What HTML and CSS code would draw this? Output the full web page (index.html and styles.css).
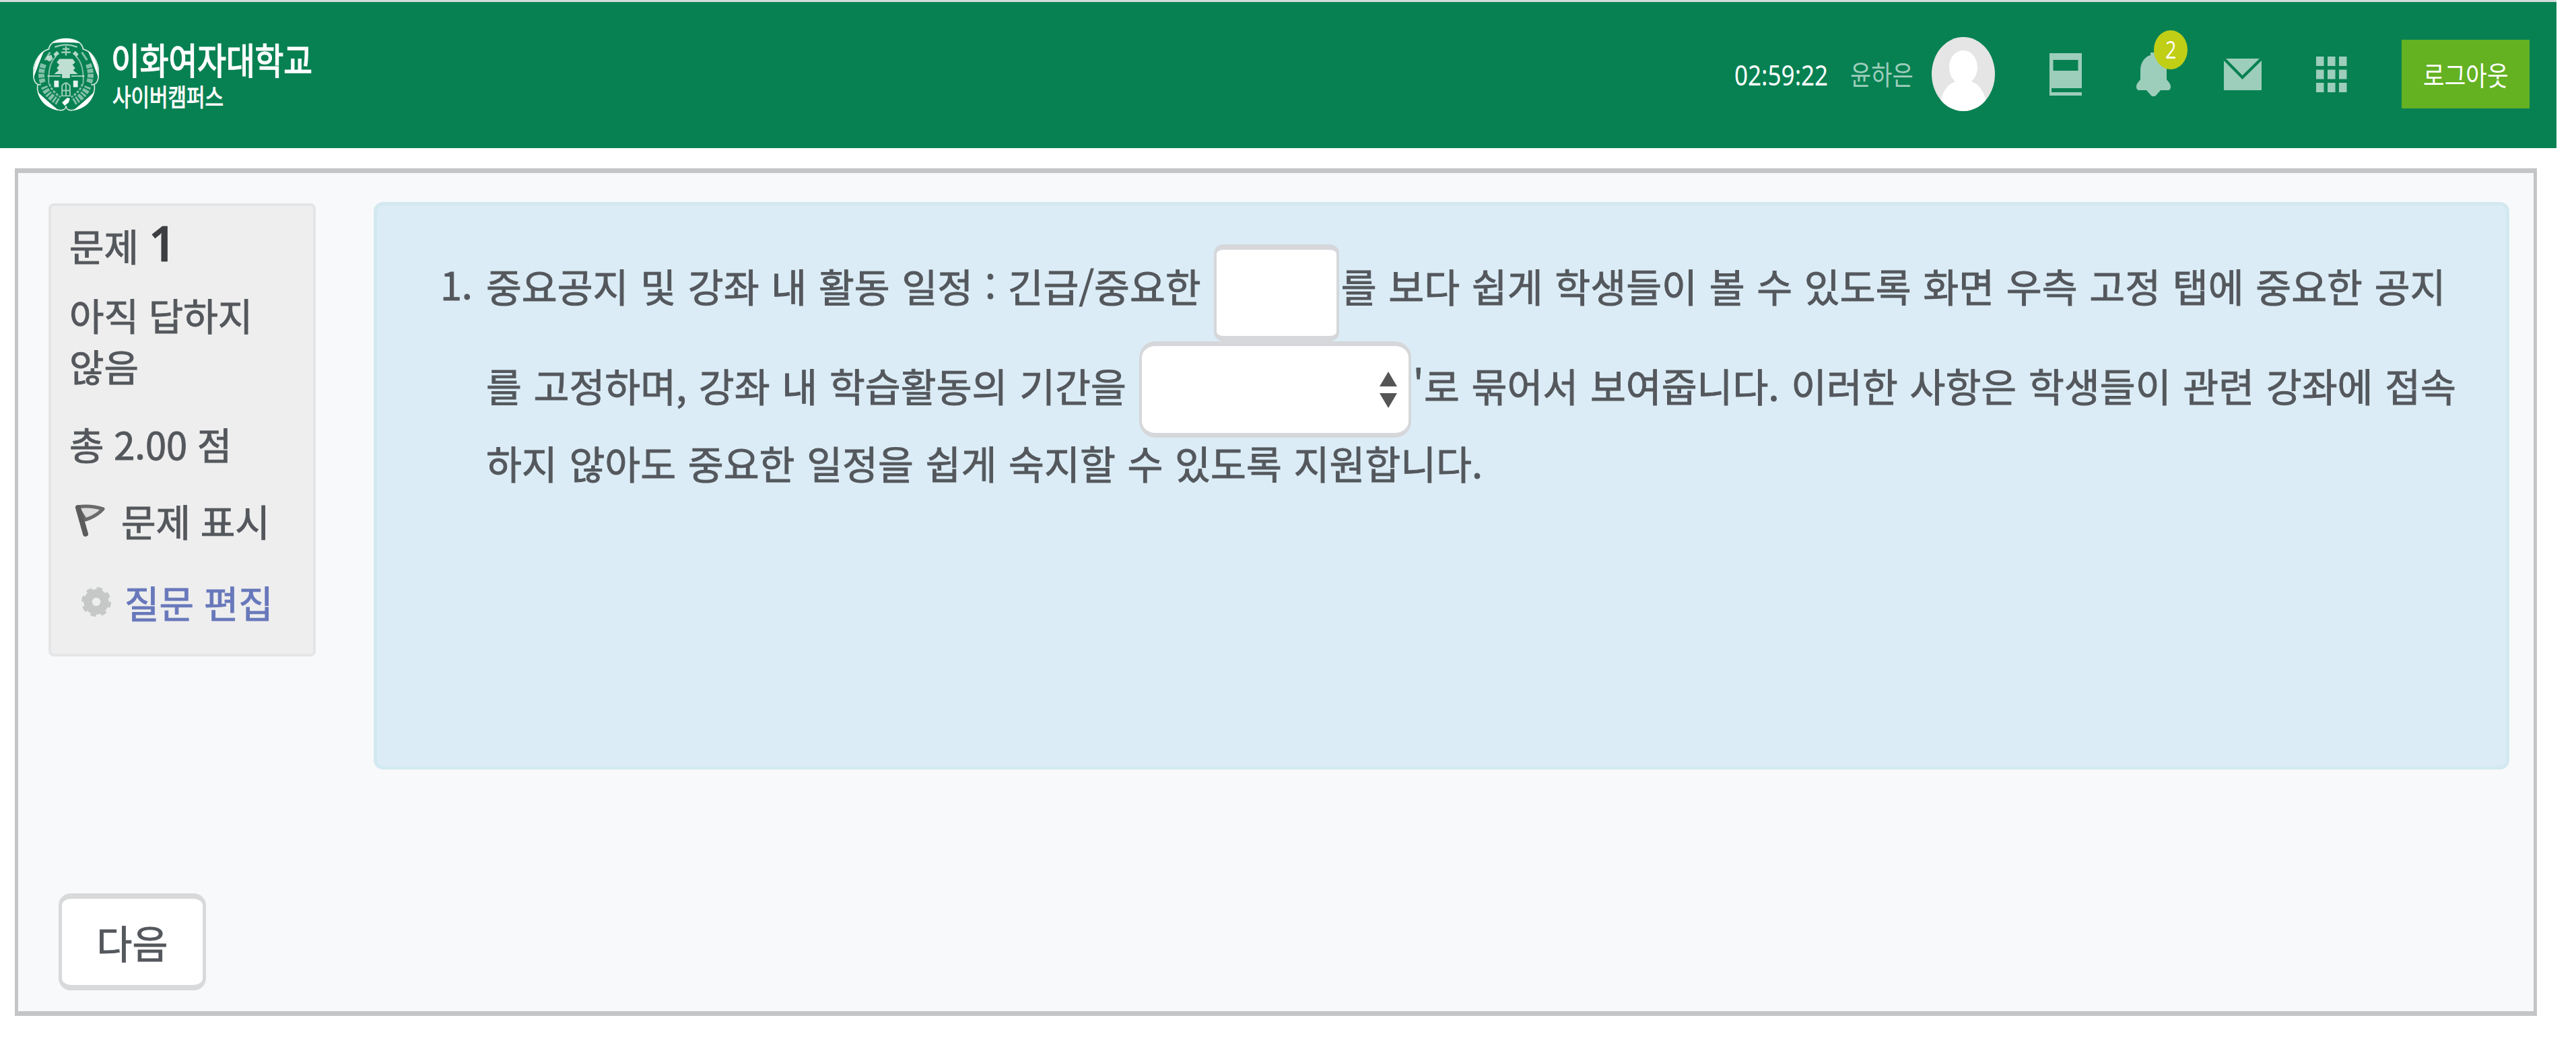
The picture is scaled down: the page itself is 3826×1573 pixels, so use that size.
FILE: index.html
```html
<!DOCTYPE html>
<html lang="ko">
<head>
<meta charset="utf-8">
<title>이화여자대학교 사이버캠퍼스</title>
<link rel="stylesheet" href="styles.css">
</head>
<body>
<header class="topbar">
  <a class="brand">
    <svg class="emblem" viewBox="0 0 100 112" fill="none" stroke="#fff">
      <g stroke-width="1.8" opacity=".8">
        <path d="M24 18C25-4 75-4 76 18"/>
        <path d="M24 17C6 22-2 45 1 60C2 68 6 72 12 71"/>
        <path d="M76 17C94 22 102 45 99 60C98 68 94 72 88 71"/>
        <path d="M7 70C4 90 22 108 42 110C47 110 50 107 50 103"/>
        <path d="M93 70C96 90 78 108 58 110C53 110 50 107 50 103"/>
      </g>
      <g fill="#fff" stroke="none">
        <path d="M29 8Q50-6 71 8Q50 6 29 8Z"/>
        <path d="M17 19Q0 34 1 60Q9 38 17 19Z"/>
        <path d="M83 19Q100 34 99 60Q91 38 83 19Z"/>
        <path d="M7 82Q13 106 39 110Q24 98 7 82Z"/>
        <path d="M93 82Q87 106 61 110Q76 98 93 82Z"/>
        <path d="M52 91L56 92L54 98L48 103L44 98Z"/>
        <path d="M22 28L28 26L30 32L25 36L20 33ZM64 20L69 25L66 29L60 24ZM36 20L31 25L34 29L40 24Z" opacity=".7"/>
      </g>
      <g opacity=".5">
        <path d="M16 40Q10 56 15 68M84 40Q90 56 85 68" stroke-width="9" stroke-dasharray="6 1.500"/>
        <path d="M17 74Q22 88 38 97M83 74Q78 88 62 97" stroke-width="10" stroke-dasharray="3 2 5 2"/>
        <path d="M25 70Q29 82 42 90M75 70Q71 82 58 90" stroke-width="3" stroke-dasharray="4 2"/>
        <path d="M38 42Q26 44 24 70M62 42Q74 44 76 70" stroke-width="0"/>
        <path d="M35 28Q22 40 24 70M65 28Q78 40 76 70" stroke-width="2"/>
        <path d="M74 22L82 34M26 22L18 34" stroke-width="3"/>
      </g>
      <path d="M33 14Q50 7 67 14M50 13V27M43 22H57M45 17H55" stroke-width="2.500" opacity=".6"/>
      <g fill="#fff" stroke="none" opacity=".75">
        <path d="M40 32H60L64 37L60 41L64 46L61 49L68 55H56V61H44V55H32L39 49L36 46L40 41L36 37Z"/>
      </g>
      <path fill="#fff" stroke="none" opacity=".9" d="M32 65H39V75H32ZM61 65H68V75H61Z"/>
      <path d="M22 58H42M58 58H78M44 88V73Q50 64 56 73V88ZM44 80H56M50 69V88" stroke-width="2" opacity=".6"/>
    </svg>
    <span class="brand-text">
      <span class="brand-name">이화여자대학교</span>
      <span class="brand-sub">사이버캠퍼스</span>
    </span>
  </a>
  <div class="tools">
    <span class="timer"><span class="narrow">02:59:22</span></span>
    <span class="user"><span class="narrow">윤하은</span></span>
    <svg class="avatar" viewBox="0 0 94 110" preserveAspectRatio="none">
      <defs><clipPath id="face"><ellipse cx="47" cy="55" rx="47" ry="55"/></clipPath></defs>
      <g clip-path="url(#face)">
        <path fill="#e5e5e5" d="M0 0H94V110H0Z"/>
        <path fill="#fff" d="M47 20C59 20 68 31 68 45C68 54 64 62 59 66C70 70 77 80 80 93V110H14V93C17 80 24 70 35 66C30 62 26 54 26 45C26 31 35 20 47 20Z"/>
      </g>
    </svg>
    <svg class="icon icon-book" viewBox="0 0 48 63"><path fill-rule="evenodd" d="M0 0H48V52H3V58H48V63H0ZM5.500 10V26H42.500V10Z"/></svg>
    <span class="bell">
      <svg class="icon icon-bell" viewBox="0 0 51 66"><path d="M21 1H29V5C39 7 45 17 45 27V41C48 45 51 47 51 52Q51 56 48 57H36L28 66H23L15 57H3Q0 56 0 52C0 47 3 45 6 41V27C6 17 12 7 21 5Z"/></svg>
      <span class="badge"><span class="narrow">2</span></span>
    </span>
    <svg class="icon icon-mail" viewBox="0 0 56 47"><path d="M0 3L27.500 31L56 3V47H0ZM3 0H53L27.500 25Z"/></svg>
    <svg class="icon icon-grid" viewBox="0 0 46 53"><path d="M0 0h11.500v14H0zM17 0h11.500v14H17zM34 0h11.500v14H34zM0 19.500h11.500v14H0zM17 19.500h11.500v14H17zM34 19.500h11.500v14H34zM0 39h11.500v14H0zM17 39h11.500v14H17zM34 39h11.500v14H34z"/></svg>
    <button class="logout"><span class="narrow">로그아웃</span></button>
  </div>
</header>

<main class="quiz">
  <div class="question-row">
    <aside class="info">
      <h2 class="info-title">문제 <b class="info-number">1</b></h2>
      <p class="info-state">아직 답하지<br>않음</p>
      <p class="info-grade">총 2.00 점</p>
      <a class="info-link info-flag"><svg class="flag" viewBox="0 0 50 52"><path fill="#dcdcdc" stroke="#6a6a6a" stroke-width="5" stroke-linejoin="round" d="M6 6Q25 3 44 9Q34 20 18 25Z"/><path stroke="#5c5c5c" stroke-width="8" stroke-linecap="round" d="M7 7L18 46"/></svg>문제 표시</a>
      <a class="info-link info-edit"><svg class="gear" viewBox="0 0 48 48"><g fill="none" stroke="#c6c8c8"><circle cx="24" cy="24" r="13" stroke-width="13"/><circle cx="24" cy="24" r="20" stroke-width="6" stroke-dasharray="8.500 7.208"/></g></svg>질문 편집</a>
    </aside>
    <section class="question">
      <span class="q-number">1.</span>
      <div class="q-body">
        <div class="q-line q-line-first">
          <span class="q-text">중요공지 및 강좌 내 활동 일정 : 긴급/중요한</span>
          <input class="blank" type="text">
          <span class="q-text">를 보다 쉽게 학생들이 볼 수 있도록 화면 우측 고정 탭에 중요한 공지</span>
        </div>
        <div class="q-line q-line-second">
          <span class="q-text">를 고정하며, 강좌 내 학습활동의 기간을</span>
          <span class="choice"><svg class="arrows" viewBox="0 0 28 54"><path fill="#555" d="M14 0L27 22H1ZM14 54L27 32H1Z"/></svg></span>
          <span class="q-text">'로 묶어서 보여줍니다. 이러한 사항은 학생들이 관련 강좌에 접속</span>
        </div>
        <div class="q-line q-line-last">
          <span class="q-text">하지 않아도 중요한 일정을 쉽게 숙지할 수 있도록 지원합니다.</span>
        </div>
      </div>
    </section>
  </div>
  <button class="next">다음</button>
</main>
</body>
</html>
```

FILE: styles.css
```css
* { box-sizing: border-box; }

body {
  margin: 0;
  width: 3826px;
  height: 1573px;
  background: #fff;
  color: #54585d;
  font-family: "Noto Sans CJK KR", "Noto Sans", sans-serif;
  overflow: hidden;
}

button, input { font: inherit; }
p, h2 { margin: 0; font-weight: 400; }

/* Top bar */
.topbar {
  display: flex;
  justify-content: space-between;
  width: 3797px;
  height: 220px;
  padding: 0 40px 0 49px;
  border-top: 3px solid #d3dbdb;
  background: #078152;
  color: #fff;
}
.brand { display: flex; align-items: flex-start; gap: 18px; padding-top: 53px; }
.emblem { width: 98px; height: 110px; }
.brand-text { display: flex; flex-direction: column; }
.brand-name, .brand-sub, .narrow {
  display: block;
  white-space: nowrap;
  transform-origin: 0 50%;
}
.brand-name {
  margin-top: 2px;
  font-size: 54px;
  line-height: 60px;
  transform: scaleX(.86);
  -webkit-text-stroke: 1.6px;
}
.brand-sub {
  margin: 4px 0 0 2px;
  font-size: 36px;
  line-height: 40px;
  transform: scaleX(.83);
  -webkit-text-stroke: 1px;
}

.tools { display: flex; align-items: center; height: 214px; }
.timer { width: 172px; font-family: "Noto Sans", sans-serif; font-size: 42px; }
.timer .narrow { transform: scaleX(.835); }
.user { width: 121px; padding-bottom: 2px; color: #9dcdbb; font-size: 40px; }
.user .narrow { transform: scaleX(.85); }
.avatar { width: 94px; height: 110px; margin-right: 81px; }
.icon { display: block; fill: #9dcdbb; }
.icon-book { width: 48px; height: 63px; margin-right: 81px; }
.bell { position: relative; margin-right: 79px; }
.icon-bell { width: 51px; height: 66px; }
.badge {
  position: absolute;
  left: 26px;
  top: -32px;
  display: flex;
  justify-content: center;
  align-items: center;
  width: 50px;
  height: 58px;
  padding-bottom: 1px;
  border-radius: 50%;
  background: #c0ce16;
  font-family: "Open Sans", sans-serif;
  font-size: 36px;
  line-height: 1;
}
.badge .narrow { transform: scaleX(.8); transform-origin: 50% 50%; }
.icon-mail { width: 56px; height: 47px; margin-right: 81px; }
.icon-grid { width: 46px; height: 53px; margin-right: 81px; }
.logout {
  width: 190px;
  height: 102px;
  padding: 0 0 0 32px;
  border: 0;
  background: #64b222;
  color: #fff;
  font-size: 40px;
  text-align: left;
}
.logout .narrow { transform: scaleX(.86); }

/* Quiz panel */
.quiz {
  width: 3746px;
  height: 1259px;
  margin: 30px 0 0 22px;
  padding: 43px 36px 0 45px;
  border: solid #c3c5c7;
  border-width: 7px 5px;
  background: #f8f9fb;
  font-size: 57.5px;
  word-spacing: 1.6px;
  -webkit-text-stroke: 1px;
}
.question-row { display: flex; align-items: flex-start; gap: 86px; height: 1027px; }

.info {
  width: 397px;
  height: 673px;
  margin-top: 2px;
  padding: 18px 0 0 27px;
  border: 4px solid #e4e5e6;
  border-radius: 8px;
  background: #eee;
  font-size: 56px;
  line-height: 76px;
  white-space: nowrap;
  word-spacing: -1px;
}
.info-title { font-size: inherit; line-height: 80px; }
.info-number { font-family: "Open Sans", sans-serif; font-size: 72px; line-height: 70px; font-weight: 600; color: #3c3e41; }
.info-state { margin-top: 25px; }
.info-grade { margin-top: 40px; }
.info-link { display: flex; align-items: center; }
.info-flag { margin-top: 38px; padding-left: 6px; }
.info-edit { margin-top: 45px; padding-left: 16px; color: #6878bb; }
.flag { width: 50px; height: 52px; margin-right: 21px; }
.gear { width: 48px; height: 46px; margin-right: 18px; }

.question {
  display: flex;
  width: 3173px;
  height: 843px;
  padding-left: 94px;
  border: 5px solid #d3e9f0;
  border-radius: 14px;
  background: #dbecf6;
  white-space: nowrap;
}
.q-number { width: 68px; padding-top: 69px; line-height: 94px; }
.q-line { display: flex; align-items: center; line-height: 94px; }
.q-text { display: block; }
.q-line-first { height: 144px; margin-top: 58px; }
.q-line-first .q-text { padding-bottom: 22px; }
.q-line-second { height: 143px; }
.q-line-second .q-text { padding-bottom: 14px; }
.q-line-last { height: 74px; }
.blank {
  width: 186px;
  height: 144px;
  margin: 0 3px 0 19px;
  padding: 0 12px;
  border: solid #d5d7da;
  border-width: 8px 4px;
  border-radius: 14px;
  background: #fff;
}
.choice {
  display: flex;
  align-items: center;
  justify-content: flex-end;
  width: 404px;
  height: 143px;
  margin: 0 3px 0 19px;
  padding-right: 16px;
  border: solid #d5d7da;
  border-width: 7px 4px;
  border-radius: 24px;
  background: #fff;
}
.arrows { width: 28px; height: 54px; }

.next {
  width: 219px;
  height: 144px;
  margin-left: 15px;
  border: solid #d8d9da;
  border-width: 8px 5px;
  border-radius: 18px;
  background: #fff;
  color: #54585d;
}
```
